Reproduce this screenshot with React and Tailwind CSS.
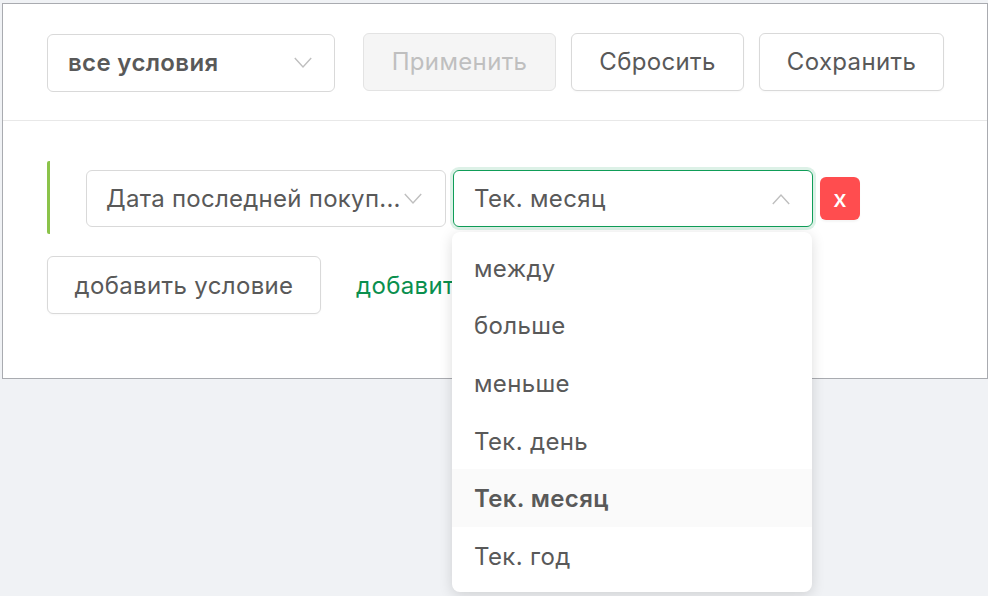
import React from "react";

const font = { fontFamily: '"Inter", "Liberation Sans", sans-serif' };

function Chevron({ up = false, className = "" }) {
  return (
    <svg width="18" height="12" viewBox="0 0 18 12" fill="none" className={`shrink-0 ${className}`}>
      <path d={up ? "M0.8 11 L9 2 L17.2 11" : "M0.8 1 L9 10 L17.2 1"} stroke="#bfbfbf" strokeWidth="1.4" />
    </svg>
  );
}

const items = ["между", "больше", "меньше", "Тек. день", "Тек. месяц", "Тек. год"];

function Button({ children, className = "" }) {
  return (
    <button className={`h-[58px] rounded-[6px] border border-[#d9d9d9] bg-white text-[24px] text-[#595959] shadow-[0_1px_2px_rgba(0,0,0,0.03)] ${className}`}>
      {children}
    </button>
  );
}

export default function App() {
  return (
    <div className="h-[596px] w-[988px] overflow-hidden bg-[#f0f2f5] pl-[2px] pt-[3px] tracking-[0.35px]" style={font}>
      <div className="relative h-[376px] w-[986px] border border-[#a9abb0] bg-white">
        <div className="flex h-[117px] items-start border-b border-[#e8e8e8] pl-[44px] pt-[29px]">
          <div className="mt-px flex h-[58px] w-[288px] items-center justify-between rounded-[6px] border border-[#d9d9d9] pl-[20px] pr-[22px] text-[24px] font-semibold text-[#595959]">
            <span>все условия</span>
            <Chevron />
          </div>
          <button className="ml-[28px] h-[58px] w-[193px] rounded-[6px] border border-[#e3e3e3] bg-[#f5f5f5] text-[24px] text-[#bfbfbf]">
            Применить
          </button>
          <Button className="ml-[15px] w-[173px]">Сбросить</Button>
          <Button className="ml-[15px] w-[185px]">Сохранить</Button>
        </div>

        <div className="pl-[44px] pt-[40px]">
          <div className="flex h-[73px] items-start rounded-[2px] border-l-[3px] border-[#8bc34a] pl-[36px] pt-[9px]">
            <div className="flex h-[57px] w-[360px] items-center justify-between rounded-[6px] border border-[#d9d9d9] pl-[19px] pr-[23px] text-[24px] tracking-[0.27px] text-[#595959]">
              <span className="whitespace-nowrap">Дата последней покуп...</span>
              <Chevron />
            </div>
            <div className="ml-[7px] flex h-[57px] w-[360px] items-center justify-between rounded-[6px] border border-[#0f9d58] pl-[20px] pr-[22px] text-[24px] text-[#595959] shadow-[0_0_0_3px_rgba(15,157,88,0.14)]">
              <span>Тек. месяц</span>
              <Chevron up />
            </div>
            <button className="ml-[7px] mt-[7px] h-[43px] w-[40px] rounded-[6px] bg-[#ff4d4f] text-[24px] font-medium text-white shadow-[0_2px_2px_rgba(0,0,0,0.04)]">
              x
            </button>
          </div>
          <div className="mt-[22px] flex items-center">
            <Button className="w-[274px] pt-px">добавить условие</Button>
            <span className="ml-[35px] whitespace-nowrap pt-px text-[24px] text-[#0a8f4e]">добавить группу</span>
          </div>
        </div>

        <div className="absolute left-[449px] top-[228px] h-[360px] w-[360px] rounded-[8px] bg-white py-[7px] text-[24px] text-[#595959] shadow-[0_3px_14px_rgba(0,0,0,0.14)]">
          {items.map((t) => (
            <div
              key={t}
              className={`flex h-[57.6px] items-center pl-[22px] pt-[2px] ${t === "Тек. месяц" ? "bg-[#fafafa] font-semibold" : ""}`}
            >
              {t}
            </div>
          ))}
        </div>
      </div>
    </div>
  );
}
